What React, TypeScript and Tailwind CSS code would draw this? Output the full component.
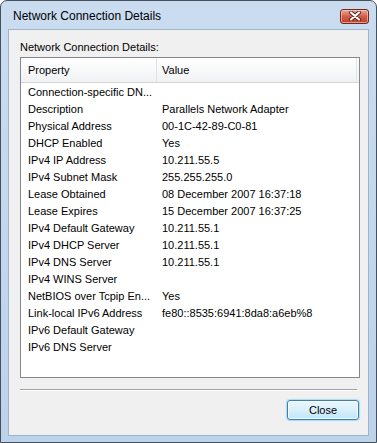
import React from "react";

const rows: [string, string][] = [
  ["Connection-specific DN...", ""],
  ["Description", "Parallels Network Adapter"],
  ["Physical Address", "00-1C-42-89-C0-81"],
  ["DHCP Enabled", "Yes"],
  ["IPv4 IP Address", "10.211.55.5"],
  ["IPv4 Subnet Mask", "255.255.255.0"],
  ["Lease Obtained", "08 December 2007 16:37:18"],
  ["Lease Expires", "15 December 2007 16:37:25"],
  ["IPv4 Default Gateway", "10.211.55.1"],
  ["IPv4 DHCP Server", "10.211.55.1"],
  ["IPv4 DNS Server", "10.211.55.1"],
  ["IPv4 WINS Server", ""],
  ["NetBIOS over Tcpip En...", "Yes"],
  ["Link-local IPv6 Address", "fe80::8535:6941:8da8:a6eb%8"],
  ["IPv6 Default Gateway", ""],
  ["IPv6 DNS Server", ""],
];

export default function App() {
  return (
    <div className="w-[377px] h-[443px] flex flex-col rounded-t-[7px] border border-[#46505c] bg-gradient-to-b from-[#cadcf0] to-[#bcd3eb] font-['Liberation_Sans',Arial,sans-serif] text-black overflow-hidden">
      {/* Title bar */}
      <div className="h-[28px] flex items-center justify-between pl-[12px] pr-[7px] shrink-0">
        <span className="text-[12px] leading-[14px] text-[#000] mt-[1px]">Network Connection Details</span>
        <div className="w-[29px] h-[15px] mt-[2px] rounded-[3px] border border-[#6e2a22] bg-gradient-to-b from-[#e9a899] via-[#d45c47] to-[#c23f2b] flex items-center justify-center shadow-[inset_0_0_0_1px_rgba(255,210,200,0.6)]">
          <svg width="14" height="10" viewBox="0 0 14 10">
            <path d="M3 1.5 L11 8.5 M11 1.5 L3 8.5" stroke="#5a2219" strokeWidth="4" strokeLinecap="round" />
            <path d="M3 1.5 L11 8.5 M11 1.5 L3 8.5" stroke="#ffffff" strokeWidth="2.2" strokeLinecap="round" />
          </svg>
        </div>
      </div>

      {/* Client area */}
      <div className="mx-[7px] mb-[6px] flex-1 flex flex-col border border-[#9fb3c9] bg-[#f0f0f0]">
        <div className="ml-[11px] mt-[10px] h-[14px] text-[11px] leading-[14px]">Network Connection Details:</div>

        {/* List */}
        <div className="ml-[11px] mt-[3px] w-[340px] h-[321px] border border-[#828790] bg-white flex flex-col">
          <div className="h-[25px] flex border-b border-[#d5d5d5] bg-gradient-to-b from-white to-[#f1f2f4] text-[11px]">
            <div className="w-[136px] border-r border-[#e2e3e5] pl-[7px] flex items-center">Property</div>
            <div className="w-[200px] border-r border-[#e2e3e5] pl-[5px] flex items-center">Value</div>
          </div>
          <div className="pt-[1px] flex flex-col">
            {rows.map(([k, v], i) => (
              <div key={i} className="h-[17px] flex items-center text-[11px]">
                <div className="w-[136px] pl-[7px] whitespace-nowrap">{k}</div>
                <div className="pl-[5px] whitespace-nowrap">{v}</div>
              </div>
            ))}
          </div>
        </div>

        {/* Separator */}
        <div className="ml-[11px] mt-[11px] w-[337px] h-[2px] border-t border-[#a0a0a0] border-b border-b-white" />

        {/* Button */}
        <div className="flex justify-end mr-[9px] mt-[9px]">
          <button className="w-[72px] h-[20px] rounded-[3px] border border-[#3c7fb1] bg-gradient-to-b from-[#eaf6fd] via-[#d9f0fc] to-[#bee6fd] shadow-[inset_0_0_0_1px_rgba(255,255,255,0.8),0_0_1px_1px_rgba(120,210,240,0.6)] text-[11px] text-black flex items-center justify-center">
            Close
          </button>
        </div>
      </div>
    </div>
  );
}
